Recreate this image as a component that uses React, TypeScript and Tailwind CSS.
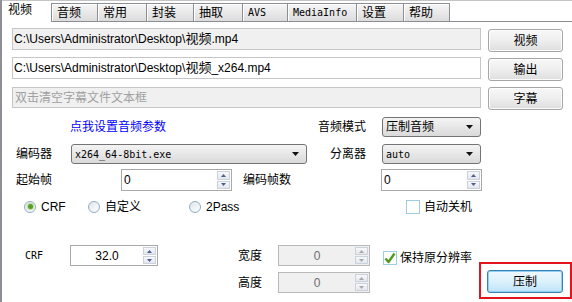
import React from 'react';

const tabs = [
  { label: '音频', w: 'w-[46px]', mono: false },
  { label: '常用', w: 'w-[49px]', mono: false },
  { label: '封装', w: 'w-[47px]', mono: false },
  { label: '抽取', w: 'w-[49px]', mono: false },
  { label: 'AVS', w: 'w-[45px]', mono: true },
  { label: 'MediaInfo', w: 'w-[69px]', mono: true },
  { label: '设置', w: 'w-[47px]', mono: false },
  { label: '帮助', w: 'w-[47px]', mono: false },
];

function Btn({ label, focus }: { label: string; focus?: boolean }) {
  return (
    <div
      className={
        focus
          ? 'w-[76px] h-[23px] rounded-[3px] border border-[#3c7fb1] bg-linear-to-b from-[#eef8fe] via-[#dcf1fc] to-[#bfe3f7] shadow-[inset_0_0_0_1px_#8fd0f3] flex items-center justify-center text-black'
          : 'w-[75px] h-[23px] rounded-[3px] border border-[#a6a6a6] bg-linear-to-b from-[#f8f8f8] via-[#eeeeee] to-[#dedede] shadow-[inset_0_0_0_1px_rgba(255,255,255,0.85)] flex items-center justify-center text-black'
      }
    >
      {label}
    </div>
  );
}

function Arrow() {
  return (
    <svg width="7" height="4" viewBox="0 0 7 4">
      <polygon points="0,0 7,0 3.5,4" fill="#111" />
    </svg>
  );
}

function Select({ w, value, mono }: { w: string; value: string; mono?: boolean }) {
  return (
    <div
      className={`${w} h-[20px] rounded-[3px] border border-[#747474] bg-linear-to-b from-[#f4f4f4] to-[#dadada] flex items-center justify-between pl-[3px] pr-[7px]`}
    >
      <span className={mono ? "font-['DejaVu_Sans_Mono',monospace] text-[10px]" : ''}>{value}</span>
      <Arrow />
    </div>
  );
}

function Tri({ up, disabled }: { up?: boolean; disabled?: boolean }) {
  return (
    <svg width="5" height="3" viewBox="0 0 5 3">
      <polygon points={up ? '0,3 2.5,0 5,3' : '0,0 5,0 2.5,3'} fill={disabled ? '#a8a8a8' : '#4b5f8f'} />
    </svg>
  );
}

function Spin({
  w,
  h,
  value,
  center,
  disabled,
}: {
  w: string;
  h: string;
  value: string;
  center?: boolean;
  disabled?: boolean;
}) {
  return (
    <div
      className={`${w} ${h} flex border ${disabled ? 'border-[#b9b9b9] bg-[#f0f0f0] text-[#6d6d6d]' : 'border-[#a9a9a9] bg-white text-black'}`}
    >
      <div className={`flex-1 flex items-center text-[12px] ${center ? 'justify-center' : 'pl-[2px]'}`}>{value}</div>
      <div className="w-[13px] flex flex-col my-[1px] mr-[1px] gap-[1px]">
        <div className="flex-1 flex items-center justify-center border border-[#ccd2dc] bg-linear-to-b from-[#f7f8fa] to-[#e3e7ee]">
          <Tri up disabled={disabled} />
        </div>
        <div className="flex-1 flex items-center justify-center border border-[#ccd2dc] bg-linear-to-b from-[#f7f8fa] to-[#e3e7ee]">
          <Tri disabled={disabled} />
        </div>
      </div>
    </div>
  );
}

function Radio({ checked }: { checked?: boolean }) {
  return (
    <div className="w-[12px] h-[12px] rounded-full border border-[#93abc0] bg-linear-to-br from-[#dfe6ec] to-white flex items-center justify-center">
      {checked && <div className="w-[5px] h-[5px] rounded-full bg-[#5a9e2c] shadow-[0_0_1px_1px_#b7dc94]" />}
    </div>
  );
}

function Check({ checked }: { checked?: boolean }) {
  return (
    <div className="w-[14px] h-[14px] border border-[#9ccfe3] bg-white flex items-center justify-center">
      {checked && (
        <svg width="12" height="12" viewBox="0 0 12 12">
          <path d="M1.5 6.5 L4.5 10 L10.5 1.5" stroke="#4f9a1e" strokeWidth="2.4" fill="none" strokeLinejoin="round" />
        </svg>
      )}
    </div>
  );
}

export default function App() {
  return (
    <div className="w-[572px] h-[302px] overflow-hidden bg-white border-l-2 border-[#8d8f95] text-black text-[12px] font-['Liberation_Sans','Noto_Sans_CJK_SC',sans-serif] flex flex-col">
      {/* tab strip */}
      <div className="flex items-end h-[22px] border-t border-[#c4c4c4]">
        <div className="w-[49px] h-full bg-white pl-[6px] pb-[3px] flex items-center">视频</div>
        {tabs.map((t, i) => (
          <div
            key={t.label}
            className={`${t.w} h-[19px] border-t border-l border-b border-[#8c8e94] ${i === tabs.length - 1 ? 'border-r' : ''} bg-linear-to-b from-[#f6f6f6] to-[#dcdcdc] shadow-[inset_1px_1px_0_#ffffff] pl-[5px] flex items-center`}
          >
            <span className={t.mono ? "font-['DejaVu_Sans_Mono',monospace] text-[10px]" : ''}>{t.label}</span>
          </div>
        ))}
        <div className="flex-1 self-stretch border-b border-[#8c8e94]" />
      </div>

      {/* file rows */}
      <div className="flex items-start mt-[6px] ml-[10px]">
        <div className="w-[469px] h-[22px] border border-[#c6c6c6] bg-[#f0f0f0] flex items-center pl-[1px]">
          C:\Users\Administrator\Desktop\<span className="text-[13px]">视频</span>.mp4
        </div>
        <div className="ml-[7px] mt-[1px]">
          <Btn label="视频" />
        </div>
      </div>
      <div className="flex items-start mt-[5px] ml-[10px]">
        <div className="w-[469px] h-[22px] border border-[#c6c6c6] bg-white flex items-center pl-[1px]">
          C:\Users\Administrator\Desktop\<span className="text-[13px]">视频</span>_x264.mp4
        </div>
        <div className="ml-[7px] mt-[1px]">
          <Btn label="输出" />
        </div>
      </div>
      <div className="flex items-start mt-[6px] ml-[10px]">
        <div className="w-[469px] h-[21px] border border-[#c6c6c6] bg-[#f0f0f0] flex items-center pl-[2px] text-[#a0a0a0]">
          双击清空字幕文件文本框
        </div>
        <div className="ml-[7px]">
          <Btn label="字幕" />
        </div>
      </div>

      {/* audio */}
      <div className="flex items-center h-[20px] mt-[7px]">
        <div className="ml-[68px] w-[248px] text-[#0000ff]">点我设置音频参数</div>
        <div className="w-[64px]">音频模式</div>
        <Select w="w-[99px]" value="压制音频" />
      </div>

      {/* encoder */}
      <div className="flex items-center h-[20px] mt-[7px]">
        <div className="ml-[14px] w-[55px]">编码器</div>
        <Select w="w-[236px]" value="x264_64-8bit.exe" mono />
        <div className="ml-[23px] w-[52px]">分离器</div>
        <Select w="w-[99px]" value="auto" mono />
      </div>

      {/* frames */}
      <div className="flex items-center h-[22px] mt-[5px]">
        <div className="ml-[14px] w-[105px]">起始帧</div>
        <Spin w="w-[111px]" h="h-[22px]" value="0" />
        <div className="ml-[11px] w-[138px]">编码帧数</div>
        <Spin w="w-[101px]" h="h-[22px]" value="0" />
      </div>

      {/* mode */}
      <div className="flex items-center h-[15px] mt-[8px]">
        <div className="ml-[22px] w-[64px] flex items-center gap-[5px]">
          <Radio checked />
          <span>CRF</span>
        </div>
        <div className="w-[101px] flex items-center gap-[5px]">
          <Radio />
          <span>自定义</span>
        </div>
        <div className="w-[217px] flex items-center gap-[5px]">
          <Radio />
          <span>2Pass</span>
        </div>
        <div className="flex items-center gap-[4px]">
          <Check />
          <span>自动关机</span>
        </div>
      </div>

      {/* crf / size */}
      <div className="flex mt-[31px]">
        <div className="w-[477px] flex flex-col">
          <div className="flex items-center h-[21px]">
            <div className="ml-[23px] w-[45px] font-['DejaVu_Sans_Mono',monospace] text-[10px]">CRF</div>
            <Spin w="w-[88px]" h="h-[21px]" value="32.0" center />
            <div className="ml-[80px] w-[40px]">宽度</div>
            <Spin w="w-[92px]" h="h-[21px]" value="0" center disabled />
            <div className="ml-[13px] mt-[4px] flex items-center gap-[3px]">
              <Check checked />
              <span>保持原分辨率</span>
            </div>
          </div>
          <div className="flex items-center h-[21px] mt-[6px]">
            <div className="ml-[236px] w-[40px]">高度</div>
            <Spin w="w-[92px]" h="h-[21px]" value="0" center disabled />
          </div>
        </div>
        <div className="mt-[17px] w-[93px] h-[37px] border-2 border-[#e3141c] pt-[6px] pl-[6px]">
          <Btn label="压制" focus />
        </div>
      </div>
    </div>
  );
}
